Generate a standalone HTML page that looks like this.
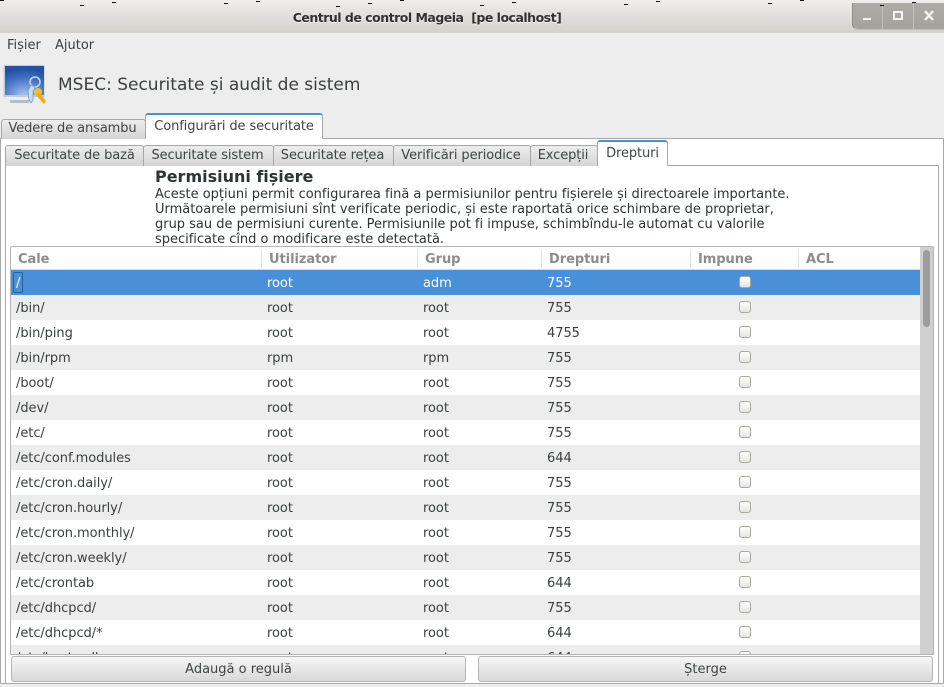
<!DOCTYPE html>
<html lang="ro"><head><meta charset="utf-8"><title>Centrul de control Mageia</title>
<style>
html,body{margin:0;padding:0}
body{width:944px;height:687px;overflow:hidden;position:relative;background:#ededed;font-family:"DejaVu Sans","Liberation Sans",sans-serif;font-size:13px;color:#2e3436}
div,span{position:absolute;box-sizing:border-box;white-space:nowrap}
.tb{left:0;top:0;width:944px;height:33px;background:linear-gradient(#efeeec,#d4d0cc)}
.ttl{left:0;width:854px;top:10px;text-align:center;font-weight:bold;font-size:12.5px;letter-spacing:-.5px;color:#33302e;text-shadow:0 1px 0 #f4f2f0;white-space:pre;line-height:15px}
.d{height:1px;width:4px;background:#111}
.tab{background:linear-gradient(#ededed,#d4d4d4);border:1px solid #a7a7a7;border-bottom:none;color:#3f4445;line-height:20px;text-align:center;border-radius:3px 3px 0 0;letter-spacing:-.1px;padding-right:2px}
.act{background:#fff;border:1px solid #a7a7a7;border-top:2px solid #4a90d9;border-bottom:none;color:#3f4445;text-align:center;border-radius:3px 3px 0 0;z-index:3;letter-spacing:-.1px}
.p{left:155px;line-height:15px;color:#2e3436;letter-spacing:-.01px}
.h{top:248px;height:21px;line-height:24px;font-weight:bold;color:#8b8d8d;font-size:13px;letter-spacing:-.05px}
.sep{top:249px;width:1px;height:19px;background:#e2e2e2}
.r{left:12px;width:909px;height:25px}
.r span{top:5px;line-height:17px;color:#3a3f40;letter-spacing:-.05px}
.sel span{color:#fff}
.cb{left:728px;width:12px;height:12px;top:6px;border:1px solid #a8a89c;border-radius:3px;background:linear-gradient(#fff,#e4e4e4)}
.btn{top:656px;height:26px;border:1px solid #b4b4b4;border-radius:3px;background:linear-gradient(#f6f6f6,#d8d8d8);text-align:center;line-height:25px;color:#3f4445}
</style></head><body>
<div class="tb"></div>
<div class="d" style="left:0;top:0"></div><div class="d" style="left:80px;top:5px"></div><div class="d" style="left:112px;top:2px"></div><div class="d" style="left:224px;top:3px"></div><div class="d" style="left:256px;top:1px"></div><div class="d" style="left:336px;top:6px"></div><div class="d" style="left:368px;top:3px"></div><div class="d" style="left:400px;top:0"></div><div class="d" style="left:480px;top:5px"></div><div class="d" style="left:512px;top:2px"></div><div class="d" style="left:624px;top:4px"></div><div class="d" style="left:656px;top:1px"></div><div class="d" style="left:768px;top:3px"></div><div class="d" style="left:800px;top:0"></div>
<div class="ttl">Centrul de control Mageia  [pe localhost]</div>
<div style="left:852px;top:3px;width:92px;height:27px;background:linear-gradient(#aeaaa5,#a5a19c);border-radius:0 0 0 6px;border-left:1px solid #8f8b86;border-bottom:1px solid #c2beba"></div>
<div style="left:882px;top:3px;width:1px;height:26px;background:#c4c0bc"></div>
<div style="left:913px;top:3px;width:1px;height:26px;background:#c4c0bc"></div>
<div class="d" style="left:880px;top:5px;width:4px"></div><div class="d" style="left:912px;top:2px;width:4px"></div>
<div style="left:863px;top:18px;width:8px;height:2px;background:#f4f4f2"></div>
<div style="left:893px;top:11px;width:10px;height:9px;border:2px solid #f4f4f2"></div>
<svg style="position:absolute;left:923px;top:10px" width="12" height="11" viewBox="0 0 12 11"><path d="M2 1L10 10M10 1L2 10" stroke="#f4f4f2" stroke-width="2.4" fill="none"/></svg>

<div style="left:7px;top:37px;line-height:17px;color:#3a3f40">Fișier</div>
<div style="left:55px;top:37px;line-height:17px;color:#3a3f40">Ajutor</div>

<svg style="position:absolute;left:3px;top:64px" width="44" height="42" viewBox="0 0 44 42">
<defs><radialGradient id="g" cx=".5" cy="1" r=".9"><stop offset="0" stop-color="#a9c4ec"/><stop offset=".6" stop-color="#4a76c6"/><stop offset="1" stop-color="#2450a8"/></radialGradient></defs>
<rect x="0.5" y="1" width="41" height="32" fill="#c3ccd6"/><rect x="2" y="2" width="39" height="29" fill="url(#g)"/>
<rect x="7" y="36" width="19" height="3" fill="#b5bcc2"/>
<circle cx="32" cy="18" r="5" fill="none" stroke="#c7d8f2" stroke-width="1.5"/>
<path d="M28 21l-3 6 1 9 2 3 2-3 0-8 2-5z" fill="#c9dcf6" stroke="#6f94c8" stroke-width=".7"/>
<circle cx="35" cy="28" r="4" fill="#f4c020"/><path d="M36 28l7 9-2 3-8-9z" fill="#f0ac10"/>
</svg>
<div style="left:58px;top:74px;font-size:17px;line-height:22px;color:#3a3f40">MSEC: Securitate și audit de sistem</div>

<!-- outer notebook -->
<div style="left:0;top:138px;width:944px;height:546px;background:#fff;border:1px solid #a7a7a7"></div>
<div class="tab" style="left:1px;top:119px;width:145px;height:20px;line-height:18px">Vedere de ansambu</div>
<div class="act" style="left:145px;top:113px;width:178px;height:26px;line-height:23px">Configurări de securitate</div>

<!-- inner notebook -->
<div style="left:5px;top:165px;width:934px;height:519px;background:#fff;border:1px solid #a7a7a7"></div>
<div class="tab" style="left:5px;top:145px;width:139px;height:21px;padding-right:0">Securitate de bază</div>
<div class="tab" style="left:143px;top:145px;width:131px;height:21px">Securitate sistem</div>
<div class="tab" style="left:273px;top:145px;width:121px;height:21px">Securitate rețea</div>
<div class="tab" style="left:393px;top:145px;width:138px;height:21px">Verificări periodice</div>
<div class="tab" style="left:530px;top:145px;width:68px;height:21px">Excepții</div>
<div class="act" style="left:597px;top:140px;width:71px;height:26px;line-height:23px">Drepturi</div>

<div class="p" style="top:168px;font-weight:bold;font-size:16px;line-height:18px">Permisiuni fișiere</div>
<div class="p" style="top:187px">Aceste opțiuni permit configurarea fină a permisiunilor pentru fișierele și directoarele importante.</div>
<div class="p" style="top:202px">Următoarele permisiuni sînt verificate periodic, și este raportată orice schimbare de proprietar,</div>
<div class="p" style="top:217px">grup sau de permisiuni curente. Permisiunile pot fi impuse, schimbîndu-le automat cu valorile</div>
<div class="p" style="top:232px">specificate cînd o modificare este detectată.</div>

<!-- table -->
<div style="left:10px;top:246px;width:924px;height:409px;border:1px solid #b4b4b4;background:#fff;overflow:hidden;border-radius:2px 2px 0 0">
</div>
<div style="left:11px;top:269px;width:909px;height:1px;background:#d8d8d8"></div>
<div class="h" style="left:18px">Cale</div><div class="h" style="left:269px">Utilizator</div><div class="h" style="left:425px">Grup</div><div class="h" style="left:549px">Drepturi</div><div class="h" style="left:698px">Impune</div><div class="h" style="left:806px">ACL</div>
<div class="sep" style="left:261px"></div><div class="sep" style="left:417px"></div><div class="sep" style="left:541px"></div><div class="sep" style="left:690px"></div><div class="sep" style="left:798px"></div>

<div style="left:11px;top:270px;width:909px;height:384px;overflow:hidden">
<div class="r sel" style="left:0;top:0;background:#4a90d9"><span style="left:5px">/</span><span style="left:256px">root</span><span style="left:412px">adm</span><span style="left:536px">755</span><div class="cb"></div></div>
<div style="left:2px;top:2px;width:10px;height:21px;border:1px solid #2a6099;border-radius:2px"></div>
<div class="r" style="left:0;top:25px;background:#ededed"><span style="left:5px">/bin/</span><span style="left:256px">root</span><span style="left:412px">root</span><span style="left:536px">755</span><div class="cb"></div></div>
<div class="r" style="left:0;top:50px;background:#fff"><span style="left:5px">/bin/ping</span><span style="left:256px">root</span><span style="left:412px">root</span><span style="left:536px">4755</span><div class="cb"></div></div>
<div class="r" style="left:0;top:75px;background:#ededed"><span style="left:5px">/bin/rpm</span><span style="left:256px">rpm</span><span style="left:412px">rpm</span><span style="left:536px">755</span><div class="cb"></div></div>
<div class="r" style="left:0;top:100px;background:#fff"><span style="left:5px">/boot/</span><span style="left:256px">root</span><span style="left:412px">root</span><span style="left:536px">755</span><div class="cb"></div></div>
<div class="r" style="left:0;top:125px;background:#ededed"><span style="left:5px">/dev/</span><span style="left:256px">root</span><span style="left:412px">root</span><span style="left:536px">755</span><div class="cb"></div></div>
<div class="r" style="left:0;top:150px;background:#fff"><span style="left:5px">/etc/</span><span style="left:256px">root</span><span style="left:412px">root</span><span style="left:536px">755</span><div class="cb"></div></div>
<div class="r" style="left:0;top:175px;background:#ededed"><span style="left:5px">/etc/conf.modules</span><span style="left:256px">root</span><span style="left:412px">root</span><span style="left:536px">644</span><div class="cb"></div></div>
<div class="r" style="left:0;top:200px;background:#fff"><span style="left:5px">/etc/cron.daily/</span><span style="left:256px">root</span><span style="left:412px">root</span><span style="left:536px">755</span><div class="cb"></div></div>
<div class="r" style="left:0;top:225px;background:#ededed"><span style="left:5px">/etc/cron.hourly/</span><span style="left:256px">root</span><span style="left:412px">root</span><span style="left:536px">755</span><div class="cb"></div></div>
<div class="r" style="left:0;top:250px;background:#fff"><span style="left:5px">/etc/cron.monthly/</span><span style="left:256px">root</span><span style="left:412px">root</span><span style="left:536px">755</span><div class="cb"></div></div>
<div class="r" style="left:0;top:275px;background:#ededed"><span style="left:5px">/etc/cron.weekly/</span><span style="left:256px">root</span><span style="left:412px">root</span><span style="left:536px">755</span><div class="cb"></div></div>
<div class="r" style="left:0;top:300px;background:#fff"><span style="left:5px">/etc/crontab</span><span style="left:256px">root</span><span style="left:412px">root</span><span style="left:536px">644</span><div class="cb"></div></div>
<div class="r" style="left:0;top:325px;background:#ededed"><span style="left:5px">/etc/dhcpcd/</span><span style="left:256px">root</span><span style="left:412px">root</span><span style="left:536px">755</span><div class="cb"></div></div>
<div class="r" style="left:0;top:350px;background:#fff"><span style="left:5px">/etc/dhcpcd/*</span><span style="left:256px">root</span><span style="left:412px">root</span><span style="left:536px">644</span><div class="cb"></div></div>
<div class="r" style="left:0;top:375px;background:#ededed"><span style="left:5px">/etc/hosts.allow</span><span style="left:256px">root</span><span style="left:412px">root</span><span style="left:536px">644</span><div class="cb"></div></div>
</div>

<div style="left:920px;top:247px;width:13px;height:407px;background:#cfcfcf"></div>
<div style="left:923px;top:250px;width:7px;height:77px;background:#9d9d9d;border-radius:4px"></div>

<div class="btn" style="left:11px;width:455px">Adaugă o regulă</div>
<div class="btn" style="left:478px;width:455px">Șterge</div>
</body></html>
